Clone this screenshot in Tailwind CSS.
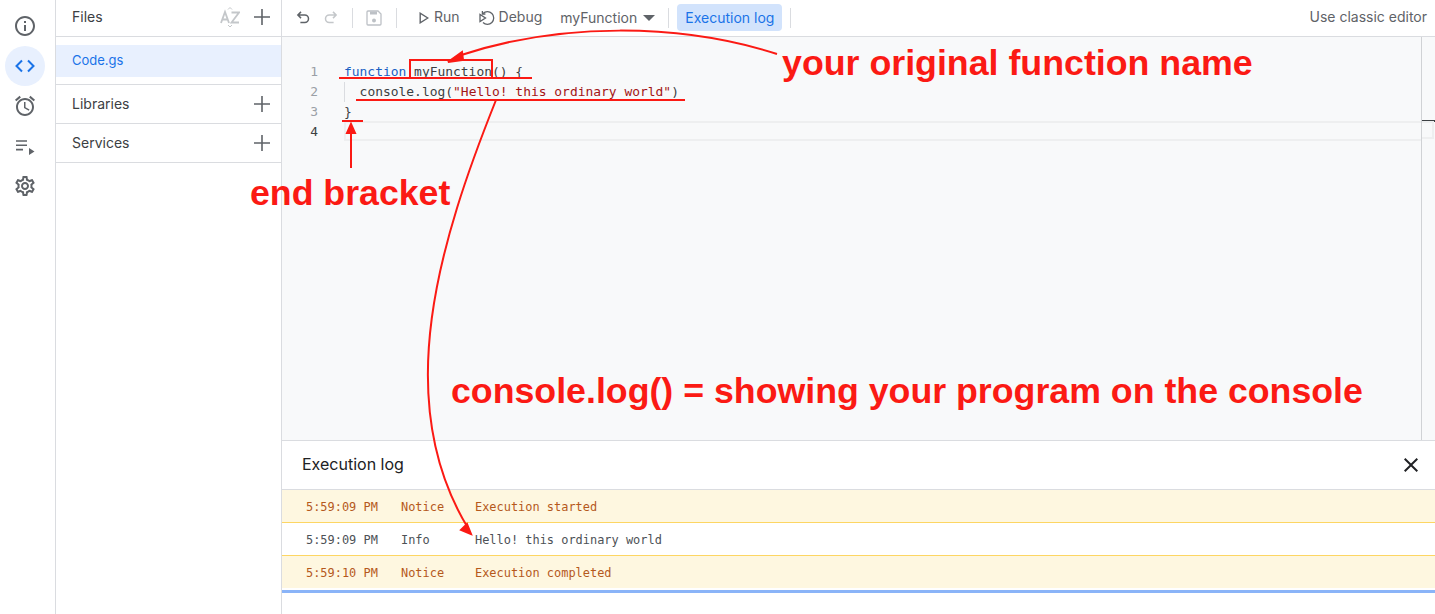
<!DOCTYPE html>
<html lang="en">
  <head>
    <meta charset="UTF-8" />
    <meta name="viewport" content="width=device-width, initial-scale=1.0" />
    <title>Apps Script</title>
    <script src="https://cdn.jsdelivr.net/npm/@tailwindcss/browser@4"></script>
  </head>
  <body class="bg-white overflow-hidden font-['Inter',sans-serif] text-[#5f6368]">
    <div class="relative flex w-[1435px] h-[614px] overflow-hidden">
      <!-- left rail -->
      <nav class="w-[56px] shrink-0 border-r border-[#dadce0] flex flex-col items-start pl-[5px] pt-[6px]">
        <div class="w-10 h-10 flex items-center justify-center">
          <svg width="24" height="24" viewBox="0 0 24 24" fill="#5f6368"><path d="M11 7h2v2h-2zm0 4h2v6h-2zm1-9C6.48 2 2 6.48 2 12s4.48 10 10 10 10-4.48 10-10S17.52 2 12 2zm0 18c-4.41 0-8-3.59-8-8s3.59-8 8-8 8 3.59 8 8-3.59 8-8 8z"/></svg>
        </div>
        <div class="w-10 h-10 rounded-full bg-[#e8f0fe] flex items-center justify-center">
          <svg width="24" height="24" viewBox="0 0 24 24" fill="none" stroke="#1a73e8" stroke-width="2"><path d="M9 6.5 3.5 12 9 17.5M15 6.5l5.500 5.500-5.500 5.500"/></svg>
        </div>
        <div class="w-10 h-10 flex items-center justify-center">
          <svg width="24" height="24" viewBox="0 0 24 24" fill="#5f6368"><path d="M22 5.72l-4.6-3.86-1.29 1.53 4.6 3.86L22 5.72zM7.88 3.39 6.6 1.86 2 5.71l1.29 1.53 4.59-3.85zM12.5 8H11v6l4.75 2.85.75-1.23-4-2.37V8zM12 4c-4.97 0-9 4.03-9 9s4.03 9 9 9 9-4.03 9-9-4.03-9-9-9zm0 16c-3.87 0-7-3.13-7-7s3.13-7 7-7 7 3.13 7 7-3.13 7-7 7z"/></svg>
        </div>
        <div class="w-10 h-10 flex items-center justify-center">
          <svg width="24" height="24" viewBox="0 0 24 24" fill="#5f6368"><path d="M3 6.200h11v1.600H3zM3 10.500h11v1.600H3zM3 14.800h7v1.600H3zM16 14v7l5.500-3.500z"/></svg>
        </div>
        <div class="w-10 h-10 flex items-center justify-center">
          <svg width="24" height="24" viewBox="0 0 24 24" fill="#5f6368"><path d="M19.43 12.98c.04-.32.07-.64.07-.98 0-.34-.03-.66-.07-.98l2.11-1.65c.19-.15.24-.42.12-.64l-2-3.46c-.12-.22-.39-.3-.61-.22l-2.49 1c-.52-.4-1.08-.73-1.69-.98l-.38-2.65C14.46 2.18 14.25 2 14 2h-4c-.25 0-.46.18-.49.42l-.38 2.65c-.61.25-1.17.59-1.69.98l-2.49-1c-.23-.09-.49 0-.61.22l-2 3.46c-.13.22-.07.49.12.64l2.11 1.65c-.04.32-.07.65-.07.98 0 .33.03.66.07.98l-2.11 1.65c-.19.15-.24.42-.12.64l2 3.46c.12.22.39.3.61.22l2.49-1c.52.4 1.08.73 1.69.98l.38 2.65c.03.24.24.42.49.42h4c.25 0 .46-.18.49-.42l.38-2.65c.61-.25 1.17-.59 1.69-.98l2.49 1c.23.09.49 0 .61-.22l2-3.46c.12-.22.07-.49-.12-.64l-2.11-1.65zM17.45 11.27c.04.31.05.52.05.73 0 .21-.02.43-.05.73l-.14 1.13.89.7 1.08.84-.7 1.21-1.27-.51-1.04-.42-.9.68c-.43.32-.84.56-1.25.73l-1.06.43-.16 1.13-.2 1.35h-1.4l-.19-1.35-.16-1.13-1.06-.43c-.43-.18-.83-.41-1.23-.71l-.91-.7-1.06.43-1.27.51-.7-1.21 1.08-.84.89-.7-.14-1.13c-.03-.31-.05-.54-.05-.74s.02-.43.05-.73l.14-1.13-.89-.7-1.08-.84.7-1.21 1.27.51 1.04.42.9-.68c.43-.32.84-.56 1.25-.73l1.06-.43.16-1.13.2-1.35h1.39l.19 1.35.16 1.13 1.06.43c.43.18.83.41 1.23.71l.91.7 1.06-.43 1.27-.51.7 1.21-1.07.85-.89.7.14 1.13zM12 8c-2.21 0-4 1.79-4 4s1.790 4 4 4 4-1.790 4-4-1.790-4-4-4zm0 6c-1.100 0-2-.9-2-2s.9-2 2-2 2 .9 2 2-.9 2-2 2z"/></svg>
        </div>
      </nav>

      <!-- files panel -->
      <aside class="w-[226px] shrink-0 border-r border-[#dadce0] text-[14px] text-[#3c4043]">
        <div class="h-[37px] border-b border-[#dadce0] flex items-center pl-4 pr-[7px]">
          <span class="flex-1 mb-[3px]">Files</span>
          <svg class="mr-[10px] mb-[2px]" width="20" height="24" viewBox="0 0 20 24" fill="none" stroke="#c4c7ca" stroke-width="1.8"><path d="M1 18 5 7l4 11M2.500 14.500h5M11.500 7.500H19L11.500 17.500H19"/><path d="M8 4.500 10 2.500 12 4.500M8 20 10 22 12 20" stroke-width="1"/></svg>
          <svg class="mb-[2px]" width="24" height="24" viewBox="0 0 24 24" fill="#5f6368"><path d="M20 12.800h-7.200V20h-1.600v-7.200H4v-1.600h7.200V4h1.600v7.200H20z"/></svg>
        </div>
        <div class="pt-2 pb-[7px] border-b border-[#dadce0]">
          <div class="h-8 bg-[#e8f0fe] pl-4 flex items-center text-[13px] text-[#1a73e8]">Code.gs</div>
        </div>
        <div class="h-[39px] border-b border-[#dadce0] flex items-center justify-between pl-4 pr-[7px]">
          <span class="mb-[1px]">Libraries</span>
          <svg width="24" height="24" viewBox="0 0 24 24" fill="#5f6368"><path d="M20 12.800h-7.200V20h-1.600v-7.200H4v-1.600h7.200V4h1.600v7.200H20z"/></svg>
        </div>
        <div class="h-[39px] border-b border-[#dadce0] flex items-center justify-between pl-4 pr-[7px]">
          <span class="mb-[1px]">Services</span>
          <svg width="24" height="24" viewBox="0 0 24 24" fill="#5f6368"><path d="M20 12.800h-7.200V20h-1.600v-7.200H4v-1.600h7.200V4h1.600v7.200H20z"/></svg>
        </div>
      </aside>

      <main class="flex-1 min-w-0 flex flex-col">
        <!-- toolbar -->
        <div class="h-[37px] shrink-0 border-b border-[#dadce0] flex items-center text-[14px] pb-[1px]">
          <svg class="ml-[14px]" width="15" height="15" viewBox="0 0 24 24" fill="none" stroke="#5f6368" stroke-width="2.400"><path d="M8 3 3 8l5 5M3 8h11a6 6 0 0 1 0 12H7"/></svg>
          <svg class="ml-[12px]" width="15" height="15" viewBox="0 0 24 24" fill="none" stroke="#c4c7ca" stroke-width="2.400"><path d="m16 3 5 5-5 5M21 8H10a6 6 0 0 0 0 12h7"/></svg>
          <div class="ml-[14px] w-px h-5 bg-[#dadce0]"></div>
          <svg class="ml-[13px]" width="16" height="16" viewBox="0 0 16 16" fill="none" stroke="#bdc1c6" stroke-width="1.300"><path d="M2 1h10l3 3v10a1 1 0 0 1-1 1H2a1 1 0 0 1-1-1V2a1 1 0 0 1 1-1z"/><path d="M4 1.500h7v3H4z" fill="#bdc1c6" stroke="none"/><circle cx="8" cy="10.500" r="2" fill="#bdc1c6" stroke="none"/></svg>
          <div class="ml-[14px] w-px h-5 bg-[#dadce0]"></div>
          <svg class="ml-[22px]" width="10" height="12" viewBox="0 0 10 12" fill="none" stroke="#5f6368" stroke-width="1.400"><path d="M1.200 1.200v9.600L8.800 6z"/></svg>
          <span class="ml-[5px] mb-[2px]">Run</span>
          <svg class="ml-[19px]" width="17" height="16" viewBox="0 0 17 16" fill="none" stroke="#5f6368" stroke-width="1.300"><path d="M1 4.500v7L6.500 8z"/><path d="M4 3.500A6.300 6.300 0 1 1 4 12.500"/><path d="M3.400 1v3h3"/></svg>
          <span class="ml-[3px] mb-[2px]">Debug</span>
          <span class="ml-[18px] mb-[1px]">myFunction</span>
          <svg class="ml-[6px]" width="12" height="6" viewBox="0 0 12 6" fill="#5f6368"><path d="M0 0h12L6 6z"/></svg>
          <div class="ml-[13px] w-px h-5 bg-[#dadce0]"></div>
          <div class="ml-[8px] h-[27px] px-2 pb-[1px] flex items-center rounded bg-[#d2e3fc] text-[#1a73e8]">Execution log</div>
          <div class="ml-2 w-px h-5 bg-[#dadce0]"></div>
          <span class="ml-auto mr-2 mb-[2px]">Use classic editor</span>
        </div>

        <!-- editor -->
        <div class="flex-1 min-h-0 bg-[#f8f9fa] flex font-['DejaVu_Sans_Mono',monospace] text-[12.950px] leading-[20px]">
          <div class="w-[36px] shrink-0 pt-[25px] text-right text-[#9aa0a6]">
            <div>1</div>
            <div>2</div>
            <div>3</div>
            <div class="text-[#3c4043]">4</div>
          </div>
          <div class="flex-1 min-w-0 ml-[26px] pt-[25px] text-[#3c4043]">
            <div class="whitespace-pre"><span class="text-[#1a5fc4]">function</span> myFunction() {</div>
            <div class="whitespace-pre border-l border-[#dadce0] pl-[14.600px] w-fit">console.log(<span class="text-[#a31515]">"Hello! this ordinary world"</span>)</div>
            <div>}</div>
            <div class="h-5 -mt-px border-y-[2px] border-l-[2px] border-[#eeeff0]"></div>
          </div>
          <div class="w-[14px] shrink-0 border-l border-[#d0d2d5] pt-[83px]">
            <div class="h-[2px] bg-[#3c4043]"></div>
            <div class="h-[18px] -mt-px border-y-[2px] border-r-[2px] border-[#eeeff0] mr-[1px]"></div>
          </div>
        </div>

        <!-- execution log -->
        <section class="h-[174px] shrink-0 border-t border-[#dadce0] flex flex-col">
          <div class="h-[49px] shrink-0 border-b border-[#dadce0] flex items-center justify-between pl-5 pr-[12px] text-[16px] text-[#202124]">
            <span class="mb-[2px]">Execution log</span>
            <svg width="24" height="24" viewBox="0 0 24 24" fill="#202124"><path d="M19 6.400 17.600 5 12 10.600 6.400 5 5 6.400 10.600 12 5 17.600 6.400 19 12 13.400 17.600 19 19 17.600 13.400 12z"/></svg>
          </div>
          <div class="font-['DejaVu_Sans_Mono',monospace] text-[11.950px]">
            <div class="h-[33px] pt-[3px] bg-[#fef7e0] border-b border-[#fdd663] flex items-center text-[#b5591c]">
              <span class="w-[119px] pl-6 shrink-0">5:59:09 PM</span><span class="w-[74px] shrink-0">Notice</span><span>Execution started</span>
            </div>
            <div class="h-[33px] pt-[3px] bg-white border-b border-[#fdd663] flex items-center text-[#4d5156]">
              <span class="w-[119px] pl-6 shrink-0">5:59:09 PM</span><span class="w-[74px] shrink-0">Info</span><span>Hello! this ordinary world</span>
            </div>
            <div class="h-[32px] pt-[3px] bg-[#fef7e0] flex items-center text-[#b5591c]">
              <span class="w-[119px] pl-6 shrink-0">5:59:10 PM</span><span class="w-[74px] shrink-0">Notice</span><span>Execution completed</span>
            </div>
            <div class="h-[3px] mt-[2px] bg-[#8ab4f8]"></div>
          </div>
        </section>
      </main>

      <!-- red annotations drawn over the screenshot -->
      <svg class="absolute left-0 top-0 pointer-events-none" width="1435" height="614" viewBox="0 0 1435 614" fill="none" stroke="#fb1a14" stroke-width="2">
        <rect x="410" y="60" width="82" height="18"/>
        <path d="M339 78H532M356 100H685M342 121H363"/>
        <path d="M777 54C680 23 560 22 458 56"/>
        <path d="M351 168V130"/>
        <path d="M496 100C440 240 390 400 468 528"/>
        <path d="M448 62 462 52 463 60z" fill="#fb1a14"/>
        <path d="M351 124 347 133H355z" fill="#fb1a14"/>
        <path d="M471 534 461 530 467 524z" fill="#fb1a14"/>
      </svg>
      <span class="absolute left-[782px] top-[42px] font-['Liberation_Sans',sans-serif] font-bold text-[35.750px] leading-[42px] text-[#fb1a14] whitespace-nowrap">your original function name</span>
      <span class="absolute left-[250px] top-[172px] font-['Liberation_Sans',sans-serif] font-bold text-[35.700px] leading-[42px] text-[#fb1a14] whitespace-nowrap">end bracket</span>
      <span class="absolute left-[451px] top-[370px] font-['Liberation_Sans',sans-serif] font-bold text-[35.720px] leading-[42px] text-[#fb1a14] whitespace-nowrap">console.log() = showing your program on the console</span>
    </div>
  </body>
</html>
